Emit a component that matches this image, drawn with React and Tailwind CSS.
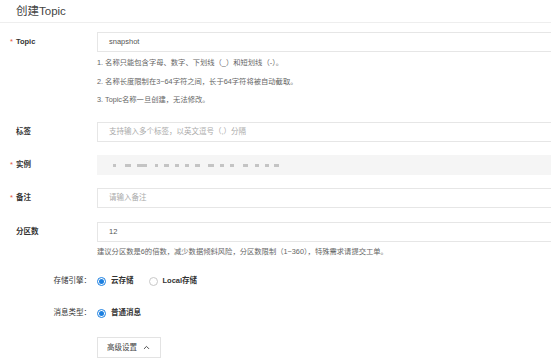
import { ChevronUp } from "lucide-react";

const Label = ({ required, children }) => (
    <div className="w-[97px] shrink-0 pl-[10px] text-[7.5px] font-bold text-[#333] flex items-center">
        {required ? <span className="text-[#e5533c] mr-[3px] font-normal">*</span> : <span className="w-[6px]" />}
        {children}
    </div>
);

const Input = ({ value, placeholder, disabled, children }) => (
    <div
        className={
            "h-[20px] w-[470px] shrink-0 flex items-center px-[11px] text-[7.5px] border " +
            (disabled ? "bg-[#f5f5f5] border-[#f5f5f5]" : "bg-white border-[#e6e6e6]")
        }
    >
        {children ? children : value ? <span className="text-[#555]">{value}</span> : <span className="text-[#aaa]">{placeholder}</span>}
    </div>
);

const Radio = ({ checked, children }) => (
    <label className="flex items-center mr-[15px]">
        <span
            className={
                "w-[9px] h-[9px] rounded-full border flex items-center justify-center " +
                (checked ? "border-[#1b7fe0]" : "border-[#c8c8c8]")
            }
        >
            {checked && <span className="w-[5px] h-[5px] rounded-full bg-[#1b7fe0]" />}
        </span>
        <span className="ml-[5px] font-bold text-[#333] text-[7.5px]">{children}</span>
    </label>
);

export default function App() {
    // blurred instance id blocks
    const blocks = [
        [3, 4], [6, 6], [10, 3], [3, 5], [5, 3], [4, 3], [4, 3], [5, 3], [6, 5], [4, 3], [4, 3], [5, 6], [4, 4], [4, 3], [5, 2],
    ];

    return (
        <div className="w-[551px] h-[363px] overflow-hidden bg-white font-['Liberation_Sans','Noto_Sans_CJK_SC',sans-serif]">
            {/* 标题 */}
            <div className="h-[23px] border-b border-[#eeeeee] pl-[16px] pt-[4px]">
                <h1 className="text-[11.5px] leading-[14px] text-[#444]">创建Topic</h1>
            </div>

            {/* Topic */}
            <div className="flex mt-[9px]">
                <Label required>Topic</Label>
                <Input value="snapshot" />
            </div>
            <div className="pl-[97px] mt-[2px] text-[7.3px] text-[#666] leading-[18.5px]">
                <p>1. 名称只能包含字母、数字、下划线（_）和短划线（-）。</p>
                <p>2. 名称长度限制在3~64字符之间，长于64字符将被自动截取。</p>
                <p>3. Topic名称一旦创建，无法修改。</p>
            </div>

            {/* 标签 */}
            <div className="flex mt-[12.5px]">
                <Label>标签</Label>
                <Input placeholder="支持输入多个标签，以英文逗号（,）分隔" />
            </div>

            {/* 实例 */}
            <div className="flex mt-[13px]">
                <Label required>实例</Label>
                <Input disabled>
                    <div className="flex items-center gap-[3px]">
                        {blocks.map((b, i) => (
                            <span key={i} className="h-[3px] bg-[#c4c4c4]" style={{ width: b[0], marginLeft: b[1] }} />
                        ))}
                    </div>
                </Input>
            </div>

            {/* 备注 */}
            <div className="flex mt-[13px]">
                <Label required>备注</Label>
                <Input placeholder="请输入备注" />
            </div>

            {/* 分区数 */}
            <div className="flex mt-[14px]">
                <Label>分区数</Label>
                <Input value="12" />
            </div>
            <p className="pl-[97px] mt-[1px] text-[7.3px] text-[#666] leading-[18px]">
                建议分区数是6的倍数，减少数据倾斜风险，分区数限制（1~360），特殊需求请提交工单。
            </p>

            {/* 存储引擎 */}
            <div className="flex items-center h-[14px] mt-[13px]">
                <div className="w-[97px] pr-[6px] text-right text-[7.5px] text-[#333]">存储引擎：</div>
                <Radio checked>云存储</Radio>
                <Radio>Local存储</Radio>
            </div>

            {/* 消息类型 */}
            <div className="flex items-center h-[14px] mt-[18px]">
                <div className="w-[97px] pr-[6px] text-right text-[7.5px] text-[#333]">消息类型：</div>
                <Radio checked>普通消息</Radio>
            </div>

            {/* 高级设置 */}
            <div className="pl-[97px] mt-[17px]">
                <button className="w-[64px] h-[21px] border border-[#e3e3e3] bg-white flex items-center justify-center text-[7.5px] text-[#444]">
                    高级设置
                    <ChevronUp className="ml-[5px]" size={9} strokeWidth={2.5} />
                </button>
            </div>
        </div>
    );
}
